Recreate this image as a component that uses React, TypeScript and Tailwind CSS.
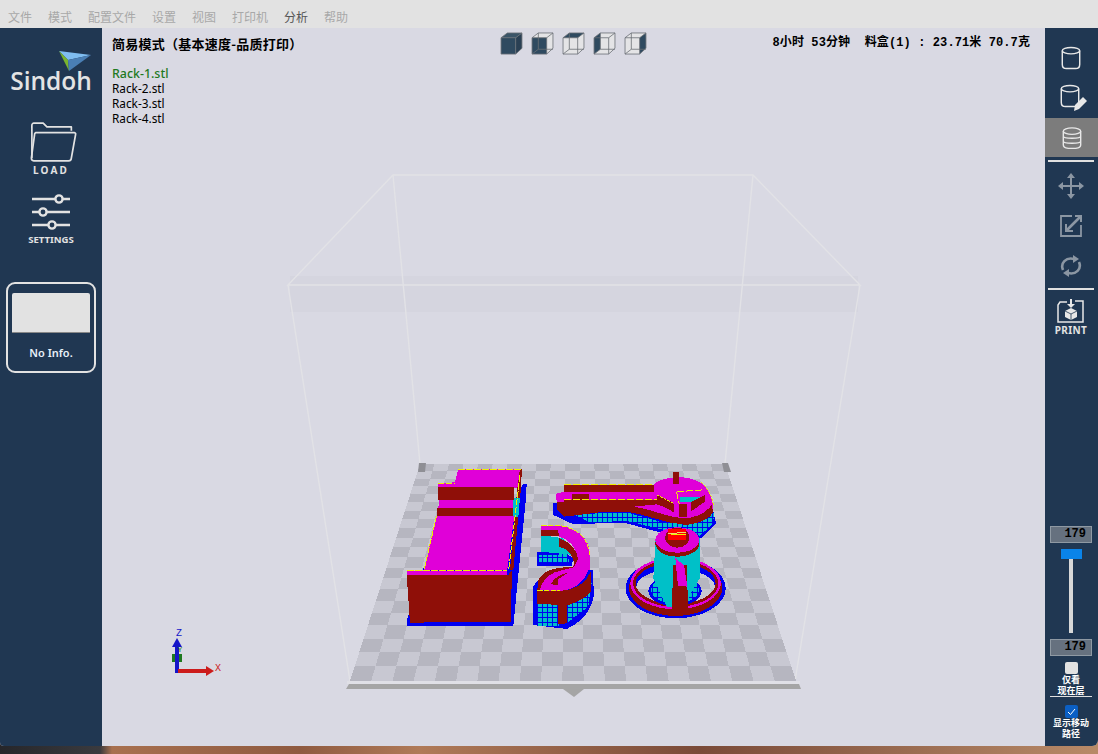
import React from "react";

const MENU = ["文件", "模式", "配置文件", "设置", "视图", "打印机", "分析", "帮助"];
const FILES = ["Rack-1.stl", "Rack-2.stl", "Rack-3.stl", "Rack-4.stl"];

function Floor() {
  const n = 21;
  const tl = [420, 464], tr = [725, 464], bl = [350, 681], br = [796, 681];
  const r = 305 / 446;
  const rowT = (i: number) => { const t = i / n; return (t * r) / (1 - t + t * r); };
  const pt = (c: number, row: number) => {
    const v = rowT(row), u = c / n;
    const lx = tl[0] + (bl[0] - tl[0]) * v, rx = tr[0] + (br[0] - tr[0]) * v;
    const y = tl[1] + (bl[1] - tl[1]) * v;
    return `${(lx + (rx - lx) * u).toFixed(1)},${y.toFixed(1)}`;
  };
  const cells: React.ReactNode[] = [];
  for (let i = 0; i < n; i++) for (let j = 0; j < n; j++) {
    if ((i + j) % 2 === 0) cells.push(<polygon key={`${i}-${j}`} points={`${pt(j, i)} ${pt(j + 1, i)} ${pt(j + 1, i + 1)} ${pt(j, i + 1)}`} fill="#b6b6c0" />);
  }
  return <g shapeRendering="crispEdges"><polygon points="420,464 725,464 796,681 350,681" fill="#c8c8d2" />{cells}</g>;
}

const RED = "#8f0f08", MAG = "#e000d8", BLUE = "#0000f0", YL = "#f0f000";
const HATCH = "url(#hatch)";
const CY = "#00c0c8";

function ring(cx: number, cy: number, rx: number, ry: number, icy: number, irx: number, iry: number) {
  return `M${cx - rx} ${cy}A${rx} ${ry} 0 1 0 ${cx + rx} ${cy}A${rx} ${ry} 0 1 0 ${cx - rx} ${cy}Z M${cx - irx} ${icy}A${irx} ${iry} 0 1 0 ${cx + irx} ${icy}A${irx} ${iry} 0 1 0 ${cx - irx} ${icy}Z`;
}

function Models() {
  return (
    <g transform="translate(400 455) scale(0.3333)" shapeRendering="crispEdges">
      <defs>
        <pattern id="hatch" width="15" height="15" patternUnits="userSpaceOnUse">
          <rect width="15" height="15" fill={CY} />
          <path d="M0 7H15M7 0V15" stroke={BLUE} strokeWidth="2.4" />
        </pattern>
      </defs>
      {/* left rack */}
      <polygon points="368,88 380,88 378,130 340,512 20,514 22,490 70,340 320,200" fill={BLUE} />
      <polygon points="175,42 362,42 358,100 113,95 113,85 165,82" fill={MAG} />
      <polygon points="360,42 366,42 362,110 340,345 330,345 352,100" fill={RED} />
      <polygon points="338,128 360,128 355,185 340,185" fill={CY} />
      <rect x="113" y="95" width="228" height="40" fill={RED} />
      <polygon points="118,135 340,135 338,158 115,158" fill={MAG} />
      <polygon points="112,158 340,158 340,182 110,182" fill={RED} />
      <polygon points="110,182 343,182 322,345 72,345" fill={MAG} />
      <polygon points="22,347 322,347 322,360 20,360" fill={MAG} />
      <polygon points="20,360 325,360 336,345 332,500 30,503" fill={RED} />
      <path d="M175 43H362M113 86H165M22 347H322M110 182L72 345M360 60L326 345" stroke={YL} strokeWidth="3" strokeDasharray="20 4" fill="none" />
      {/* s-piece: supports */}
      <path d="M410 292 L490 290 L520 310 L515 332 L410 332Z" fill={BLUE} />
      <path d="M418 300 L500 298 L510 325 L418 325Z" fill={HATCH} />
      <path d="M424 240 L490 250 L520 300 L424 290Z" fill={CY} />
      <path d="M400 395 Q420 350 520 340 L578 345 L582 420 Q570 490 500 522 L400 510Z" fill={BLUE} />
      <path d="M410 448 L478 448 L478 512 L410 512Z" fill={HATCH} />
      <path d="M500 445 L575 385 L565 455 L500 505Z" fill={HATCH} />
      {/* s-piece: upper arm */}
      <rect x="424" y="212" width="56" height="30" fill={RED} />
      <rect x="424" y="212" width="56" height="14" fill={MAG} />
      <path d="M470 210 C530 215 570 250 570 300 L570 345 L512 345 L534 310 C530 280 505 250 478 245Z" fill={MAG} />
      <path d="M478 250 C505 258 530 280 535 312 L520 338 C528 310 505 280 478 276Z" fill={RED} />
      {/* s-piece: lower */}
      <path d="M412 405 C415 365 450 340 520 335 L570 322 C565 370 530 405 480 408Z" fill={MAG} />
      <path d="M412 408 L414 380 C425 345 470 335 520 337 L490 345 C450 350 425 375 418 408Z" fill={RED} />
      <path d="M452 388 C465 365 480 360 505 352 L475 372 L475 390Z" fill={RED} />
      <path d="M412 408 L480 408 C525 405 560 385 572 350 L572 410 C560 430 520 445 500 452 L500 505 L475 508 L475 450 L412 446Z" fill={RED} />
      <path d="M424 212H480C530 218 565 250 570 300M412 408H480" stroke={YL} strokeWidth="3" fill="none" strokeDasharray="16 4" />
      {/* wrench */}
      <path d="M458 146 L490 140 L760 160 L940 170 L948 205 L905 250 L790 235 L680 205 L600 205 L520 208 L460 180Z" fill={BLUE} />
      <path d="M520 178 L680 172 L780 200 L890 205 L942 170 L940 205 L900 242 L780 222 L680 198 L570 202Z" fill={HATCH} />
      <path d="M468 116 L492 110 L492 90 L760 90 C780 65 860 55 905 85 C935 110 945 150 935 175 L860 195 C800 195 760 170 700 155 L600 155 L492 165 L470 142Z" fill={MAG} />
      <rect x="492" y="90" width="270" height="22" fill={RED} />
      <polygon points="492,112 760,112 770,120 770,135 492,135" fill={MAG} />
      <rect x="515" y="116" width="52" height="20" fill={RED} />
      <path d="M470 142 H492 V135 H770 L780 125 C790 135 815 140 820 165 L770 148 L700 155 L600 155 L492 165 L470 165Z" fill={RED} />
      <path d="M468 160 L492 185 L600 172 L680 170 C730 175 790 205 860 210 C900 205 935 190 940 170 L935 150 C920 175 880 190 850 190 C790 185 740 155 690 155 L600 155 L480 165Z" fill={RED} />
      <path d="M770 118 L832 138 L838 185 L860 185 L860 150 L915 118 L905 95 L830 110 L760 90 C790 70 860 60 900 88 L910 120 L870 140 L940 155" fill={MAG} />
      <rect x="820" y="50" width="16" height="36" fill={RED} />
      <path d="M840 125 H910 L900 140 H840Z" fill={CY} />
      <path d="M770 120 C790 128 810 135 822 148 L822 172 C800 160 780 150 770 146Z" fill={RED} />
      <path d="M872 142 L915 120 L915 140 L872 170Z" fill={RED} />
      <rect x="838" y="148" width="22" height="38" fill={RED} />
      <path d="M492 90 H760M492 135 H770M830 110 L905 105M830 112 L838 148" stroke={YL} strokeWidth="3" fill="none" strokeDasharray="22 5" />
      <path d="M770 120 L822 145 M940 150 C935 120 925 100 900 80" stroke={YL} strokeWidth="3" fill="none" strokeDasharray="8 4" />
      {/* ring */}
      <path d={ring(827, 400, 150, 90, 395, 118, 52)} fill={BLUE} fillRule="evenodd" />
      <path d={ring(827, 398, 140, 85, 385, 120, 62)} fill={RED} fillRule="evenodd" />
      <path d={ring(827, 385, 136, 78, 385, 122, 66)} fill={MAG} fillRule="evenodd" />
      <path d={ring(827, 385, 128, 71, 385, 122, 66)} fill={RED} fillRule="evenodd" />
      <ellipse cx="825" cy="408" rx="80" ry="46" fill={BLUE} />
      <ellipse cx="825" cy="405" rx="72" ry="40" fill={HATCH} />
      <polygon points="767,250 900,250 900,370 890,385 850,455 800,455 760,370" fill={CY} />
      <polygon points="820,330 860,330 865,475 815,475" fill={RED} />
      <polygon points="826,310 852,330 862,395 834,392" fill={MAG} />
      <ellipse cx="832" cy="265" rx="66" ry="40" fill={RED} />
      <ellipse cx="832" cy="255" rx="66" ry="38" fill={MAG} />
      <ellipse cx="832" cy="248" rx="36" ry="30" fill={RED} />
      <rect x="804" y="222" width="54" height="34" fill="#ff0000" />
      <path d="M812 240 H858" stroke={YL} strokeWidth="3" />
      <path d="M804 236 L858 232" stroke="#e8e070" strokeWidth="3" />
    </g>
  );
}

function Scene() {
  return (
    <svg className="absolute left-0 top-0" width="1098" height="718" viewBox="0 28 1098 718">
      <rect x="290" y="276" width="568" height="36" fill="#d5d5df" />
      <g stroke="#e2e2e6" strokeWidth="1.4" fill="none">
        <path d="M393 175H753L860 285H288Z" />
        <path d="M288 285L350 681M860 285L795 681M393 175L420 464M753 175L725 464" />
      </g>
      <Floor />
      <rect x="347" y="681" width="453" height="3" fill="#e0e0e6" />
      <polygon points="349,684 799,684 801,689 346,689" fill="#a5a5a5" />
      <polygon points="563,689 584,689 574,697" fill="#a5a5a5" />
      <polygon points="419,463 426,463 425,472 418,472" fill="#8f8f95" />
      <polygon points="722,463 728,463 731,472 724,472" fill="#8f8f95" />
      <Models />
      {/* axis */}
      <rect x="172" y="654" width="10" height="8" fill="#1f7a1f" />
      <rect x="175" y="643" width="4" height="30" fill="#1515c8" />
      <polygon points="177,638 182,647 172,647" fill="#1515c8" />
      <rect x="178" y="669" width="28" height="4" fill="#cc1b1b" />
      <polygon points="206,666 214,671 206,676" fill="#cc1b1b" />
      <text x="179" y="636" textAnchor="middle" fontSize="10" fill="#1515c8" fontFamily="'Liberation Mono',monospace">Z</text>
      <text x="180" y="652" textAnchor="middle" fontSize="8" fill="#1f7a1f" fontFamily="'Liberation Mono',monospace">Y</text>
      <text x="218" y="671" textAnchor="middle" fontSize="10" fill="#cc1b1b" fontFamily="'Liberation Mono',monospace">X</text>
    </svg>
  );
}

function Cyl({ stroke = "#e8e8e8" }: { stroke?: string }) {
  return (
    <svg width="22" height="24" viewBox="0 0 24 26" fill="none" stroke={stroke} strokeWidth="1.6">
      <ellipse cx="12" cy="5" rx="9.5" ry="3.5" />
      <path d="M2.5 5V20C2.5 24 5 24.5 7 24.5H17C19 24.5 21.5 24 21.5 20V5" />
    </svg>
  );
}

function CubeIcon({ kind }: { kind: number }) {
  const dark = "#2f4a60";
  const fillFront = kind === 0 || kind === 1;
  return (
    <svg width="23" height="23" viewBox="0 0 22 24" preserveAspectRatio="none">
      <polygon points="1,6 7,1 21,1 21,17 15,23 1,23" fill="#e4e4e6" />
      {kind === 0 && <polygon points="1,6 7,1 21,1 15,6" fill="#3b5568" />}
      {kind === 0 && <polygon points="15,6 21,1 21,17 15,23" fill="#2a4054" />}
      {fillFront && <rect x="1" y="6" width="14" height="17" fill={dark} />}
      {kind === 2 && <polygon points="1,6 7,1 21,1 15,6" fill={dark} />}
      {kind === 3 && <polygon points="1,6 7,1 7,18 1,23" fill={dark} />}
      {kind === 4 && <polygon points="15,6 21,1 21,17 15,23" fill={dark} />}
      <g fill="none" stroke="#6a6f76" strokeWidth="0.8">
        <path d="M1 6L7 1H21V17L15 23H1Z" />
        <path d="M1 6H15V23M15 6L21 1" />
        {kind !== 0 && <path d="M7 1V18H21M7 18L1 23" />}
      </g>
    </svg>
  );
}

function CnLabel({ children }: { children: React.ReactNode }) {
  return <div className="text-white text-[9px] leading-[10.5px] font-bold text-center font-['Liberation_Sans','Noto_Sans_CJK_SC',sans-serif]">{children}</div>;
}

function LayerBox() {
  return <div className="w-[42px] h-[17px] bg-[#66717f] border border-[#8f99a3] text-black text-[12px] leading-[15px] font-bold text-right pr-[5px] font-['Liberation_Mono',monospace]">179</div>;
}

export default function App() {
  return (
    <div className="relative w-[1098px] h-[754px] overflow-hidden flex flex-col font-['Noto_Sans',sans-serif] bg-[linear-gradient(90deg,#26262a_0px,#3a3a3e_100px,#a8704f_112px,#8f5a40_300px,#b07a58_420px,#7a4a38_700px,#b88a68_1098px)]">
      <div className="h-[28px] shrink-0 bg-[#e2e2e2] pt-[5px] flex items-center">
        <div className="flex pl-[8px] gap-[16px] text-[12px] text-[#a8a8a8] font-['Noto_Sans_CJK_SC',sans-serif]">
          {MENU.map((m) => (
            <span key={m} className={m === "分析" ? "text-[#555]" : ""}>{m}</span>
          ))}
        </div>
      </div>
      <div className="relative h-[718px] shrink-0 flex bg-[#d9d9e3] rounded-bl-[4px] rounded-br-[6px] overflow-hidden">
        <Scene />
        <aside className="relative w-[102px] shrink-0 bg-[#203752] flex flex-col items-center">
          <svg className="mt-[22px]" width="96" height="52" viewBox="-6 0 96 52">
            <polygon points="50,1 82,5 59,10" fill="#7fbdf0" />
            <polygon points="50,1 59,10 60,21" fill="#7ab52e" />
            <polygon points="59,10 82,5 60,21" fill="#4a7fb5" />
            <text x="42" y="40" textAnchor="middle" fontSize="24.5" fontWeight="600" fill="#e4e4e4" fontFamily="'Open Sans',sans-serif">Sindoh</text>
          </svg>
          <svg className="mt-[20px] ml-[5px]" width="47" height="40" viewBox="0 0 50 42" fill="none" stroke="#e2e2e2" strokeWidth="1.8" strokeLinejoin="round">
            <path d="M2 38V3C2 2 3 1 4 1H14L18 5H44V9" />
            <path d="M6 11H47C48 11 49 12 48.5 13L44 38C44 40 43 41 41 41H4C2 41 1.5 40 1.5 38L5 12Z" />
          </svg>
          <div className="mt-[2px] text-[10px] leading-[12px] font-bold tracking-[2.2px] text-[#e2e2e2]">LOAD</div>
          <svg className="mt-[18px]" width="40" height="36" viewBox="0 0 40 36" fill="none" stroke="#e2e2e2">
            <path d="M1 5H39M1 18H39M1 31H39" strokeWidth="2.4" />
            <circle cx="28" cy="5" r="3.6" fill="#203752" strokeWidth="2.4" />
            <circle cx="12" cy="18" r="3.6" fill="#203752" strokeWidth="2.4" />
            <circle cx="21" cy="31" r="3.6" fill="#203752" strokeWidth="2.4" />
          </svg>
          <div className="mt-[4px] text-[9.6px] leading-[12px] font-bold text-[#e2e2e2]">SETTINGS</div>
          <div className="mt-[36px] w-[90px] h-[91px] border-2 border-[#e2e2e2] rounded-[9px] px-[4px] pt-[9px] flex flex-col items-center">
            <div className="w-[78px] h-[40px] bg-[#e2e2e2] border-b border-[#888] rounded-t-[2px] shrink-0" />
            <div className="mt-[13px] text-[11px] leading-[14px] font-semibold text-[#e8f0f8]">No Info.</div>
          </div>
        </aside>
        <main className="relative flex-1 min-w-0 pl-[10px] pt-[7px]">
          <div className="flex">
            <div className="w-[388px] text-[13px] leading-[17px] font-bold tracking-[0.25px] text-black font-['Noto_Sans_CJK_SC',sans-serif]">简易模式（基本速度-品质打印）</div>
            <div className="flex gap-[8px] -mt-[3px]">
              {[0, 1, 2, 3, 4].map((k) => <CubeIcon key={k} kind={k} />)}
            </div>
            <div className="ml-auto pr-[15px] text-[12px] leading-[17px] font-bold text-black whitespace-pre tracking-[0.1px] font-['Liberation_Mono','Noto_Sans_CJK_SC',monospace]">8小时 53分钟  料盒(1) : 23.71米 70.7克</div>
          </div>
          <div className="mt-[11px] leading-[15px] text-black">
            {FILES.map((f, i) => <div key={f} className={i === 0 ? "text-[12.4px] text-[#1f7a1f] font-medium" : "text-[11.8px]"}>{f}</div>)}
          </div>
        </main>
        <aside className="relative w-[53px] shrink-0 bg-[#203752] flex flex-col items-center pr-[1px]">
          <div className="mt-[18px] h-[24px]"><Cyl /></div>
          <div className="mt-[14px] relative w-[24px] h-[26px]">
            <Cyl />
            <svg className="absolute -right-[5px] bottom-[-2px]" width="16" height="16" viewBox="0 0 16 16"><polygon points="11,1 15,5 7,13 2,15 3,9" fill="#e8e8e8" /></svg>
          </div>
          <div className="mt-[8px] self-start w-[53px] h-[39px] bg-[#7c7c7c] flex items-center justify-center">
            <svg width="22" height="22" viewBox="0 0 24 24" fill="none" stroke="#e8e8e8" strokeWidth="1.5">
              <ellipse cx="12" cy="4.5" rx="9.5" ry="3.5" />
              <path d="M2.5 4.5V19.5C2.5 22 6 23.5 12 23.5S21.5 22 21.5 19.5V4.5M2.5 10C2.5 13 21.5 13 21.5 10M2.5 15.5C2.5 18.5 21.5 18.5 21.5 15.5" />
            </svg>
          </div>
          <div className="mt-[3px] w-[46px] h-[2px] bg-[#e0e0e0]" />
          <svg className="mt-[11px]" width="26" height="26" viewBox="0 0 26 26" fill="#8b96a3">
            <rect x="12" y="4" width="2" height="18" /><rect x="4" y="12" width="18" height="2" />
            <polygon points="13,0 17,5 9,5" /><polygon points="13,26 17,21 9,21" /><polygon points="0,13 5,9 5,17" /><polygon points="26,13 21,9 21,17" />
          </svg>
          <svg className="mt-[15px]" width="24" height="24" viewBox="0 0 24 24" fill="none" stroke="#8b96a3" strokeWidth="2">
            <path d="M13 2H2V22H22V11" strokeWidth="1.8" />
            <path d="M16 2H22V8" /><path d="M22 2L7 17" strokeWidth="2.6" /><path d="M7 10V17H14" />
          </svg>
          <svg className="mt-[16px]" width="22" height="24" viewBox="0 0 22 24" fill="none" stroke="#8b96a3" strokeWidth="2.6">
            <path d="M3 16C0 9 6 3 14 5" /><path d="M19 8C22 15 16 21 8 19" />
            <polygon points="13,1 19,5 13,9" fill="#8b96a3" stroke="none" /><polygon points="9,15 3,19 9,23" fill="#8b96a3" stroke="none" />
          </svg>
          <div className="mt-[10px] w-[46px] h-[2px] bg-[#e0e0e0]" />
          <svg className="mt-[9px]" width="28" height="24" viewBox="0 0 28 24" fill="none" stroke="#e8e8e8" strokeWidth="1.5">
            <path d="M10 3H3L1 6V23H26V2H18" />
            <path d="M14 0V7" strokeWidth="2" />
            <polygon points="14,9 10,5 18,5" fill="#e8e8e8" stroke="none" />
            <polygon points="14,9 20,12 20,18 14,21 8,18 8,12" fill="#e8e8e8" stroke="none" />
            <path d="M8 12L14 15L20 12M14 15V21" stroke="#203752" strokeWidth="0.8" />
          </svg>
          <div className="mt-[1px] text-[10px] leading-[12px] font-bold tracking-[0.4px] text-[#e2e2e2]">PRINT</div>
          <div className="mt-[190px] flex flex-col items-center">
            <LayerBox />
            <div className="relative mt-[6px] w-[21px] h-[84px] flex justify-center">
              <div className="absolute top-0 left-0 w-[21px] h-[10px] bg-[#0a84ea]" />
              <div className="w-[4px] h-full bg-[#d8d8d8]" />
            </div>
            <div className="mt-[6px]"><LayerBox /></div>
          </div>
          <div className="mt-[6px] w-[13px] h-[12px] rounded-[2px] bg-[#e2e2e2] shrink-0" />
          <div className="mt-[1px]"><CnLabel>仅看<br />现在层</CnLabel></div>
          <div className="w-[42px] h-[1px] bg-[#e0e0e0] shrink-0" />
          <div className="mt-[8px] w-[13px] h-[13px] rounded-[2px] bg-[#0b5fc4] flex items-center justify-center shrink-0">
            <svg width="9" height="9" viewBox="0 0 9 9" fill="none" stroke="#fff" strokeWidth="1"><path d="M1 5L3.5 7.5L8 2" /></svg>
          </div>
          <CnLabel>显示移动<br />路径</CnLabel>
        </aside>
      </div>
    </div>
  );
}
